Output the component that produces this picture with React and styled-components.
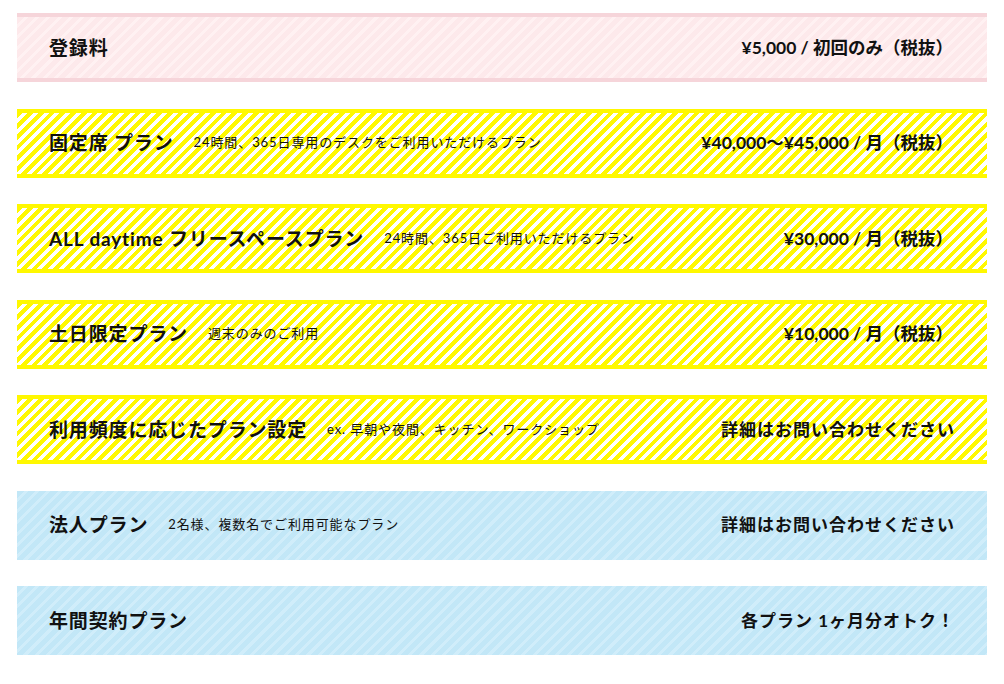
import styled, { createGlobalStyle, css } from "styled-components";

const GlobalStyle = createGlobalStyle`
  body {
    margin: 0;
    background: #fff;
    font-family: Lato, "Noto Sans CJK JP", sans-serif;
    color: #111;
  }
`;

const stripes = {
  pink: css`
    border-top: 4px solid #f6d5da;
    border-bottom: 4px solid #f6d5da;
    background: repeating-linear-gradient(135deg, #fde9eb 0 5px, #fff1f2 5px 8px);
  `,
  yellow: css`
    border-top: 4px solid #fff800;
    border-bottom: 4px solid #fff800;
    background: repeating-linear-gradient(135deg, #fff800 0 4px, #fff 4px 7.6px);
  `,
  blue: css`
    background: repeating-linear-gradient(135deg, #c2e7f7 0 5px, #d0edfa 5px 8px);
  `,
};

const Page = styled.div`
  width: 970px;
  padding: 13px 17px;
  display: flex;
  flex-direction: column;
  gap: 26.5px;
`;

const PlanRow = styled.div`
  box-sizing: border-box;
  height: 69px;
  display: flex;
  align-items: center;
  padding: 0 34px 3px 32px;
  ${({ $tone }) => stripes[$tone]}
`;

const Title = styled.h3`
  margin: 0;
  font-size: 19px;
  font-weight: 700;
  letter-spacing: 0.85px;
  white-space: nowrap;
`;

const Desc = styled.span`
  margin-left: 20px;
  font-size: 13px;
  letter-spacing: 0.9px;
  white-space: nowrap;
`;

const Price = styled.span`
  margin-left: auto;
  font-size: ${({ $spaced }) => ($spaced ? "17px" : "17.5px")};
  font-weight: 700;
  white-space: nowrap;
  letter-spacing: ${({ $spaced }) => ($spaced ? "1px" : "0")};
  margin-right: ${({ $spaced }) => ($spaced ? "-2px" : "0")};
`;

const plans = [
  { tone: "pink", title: "登録料", price: "¥5,000 / 初回のみ（税抜）" },
  {
    tone: "yellow",
    title: "固定席 プラン",
    desc: "24時間、365日専用のデスクをご利用いただけるプラン",
    price: "¥40,000〜¥45,000 / 月（税抜）",
  },
  {
    tone: "yellow",
    title: "ALL daytime フリースペースプラン",
    desc: "24時間、365日ご利用いただけるプラン",
    price: "¥30,000 / 月（税抜）",
  },
  { tone: "yellow", title: "土日限定プラン", desc: "週末のみのご利用", price: "¥10,000 / 月（税抜）" },
  {
    tone: "yellow",
    title: "利用頻度に応じたプラン設定",
    desc: "ex. 早朝や夜間、キッチン、ワークショップ",
    price: "詳細はお問い合わせください",
    spaced: true,
  },
  {
    tone: "blue",
    title: "法人プラン",
    desc: "2名様、複数名でご利用可能なプラン",
    price: "詳細はお問い合わせください",
    spaced: true,
  },
  { tone: "blue", title: "年間契約プラン", price: "各プラン 1ヶ月分オトク！", spaced: true },
];

export default function App() {
  return (
    <>
      <GlobalStyle />
      <Page>
        {plans.map((p, i) => (
          <PlanRow key={i} $tone={p.tone}>
            <Title>{p.title}</Title>
            {p.desc && <Desc>{p.desc}</Desc>}
            <Price $spaced={p.spaced}>{p.price}</Price>
          </PlanRow>
        ))}
      </Page>
    </>
  );
}
